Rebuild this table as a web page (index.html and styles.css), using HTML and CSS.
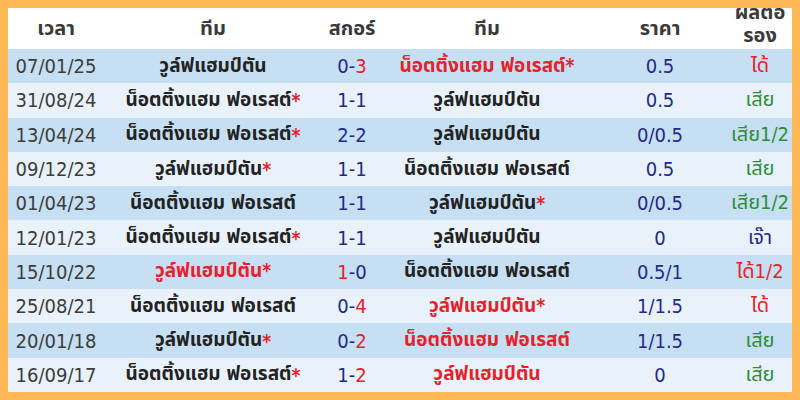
FILE: index.html
```html
<!DOCTYPE html>
<html lang="th">
<head>
<meta charset="utf-8">
<link rel="stylesheet" href="styles.css">
</head>
<body>
<div class="frame">
  <div class="table">
    <div class="row head">
      <div class="c">เวลา</div>
      <div class="c">ทีม</div>
      <div class="c">สกอร์</div>
      <div class="c">ทีม</div>
      <div class="c">ราคา</div>
      <div class="c wrap">ผลต่อ<br>รอง</div>
    </div>
    <div class="row odd">
      <div class="c date">07/01/25</div>
      <div class="c team">วูล์ฟแฮมป์ตัน</div>
      <div class="c score"><span class="b">0-</span><span class="r">3</span></div>
      <div class="c team red">น็อตติ้งแฮม ฟอเรสต์*</div>
      <div class="c price">0.5</div>
      <div class="c res win">ได้</div>
    </div>
    <div class="row even">
      <div class="c date">31/08/24</div>
      <div class="c team">น็อตติ้งแฮม ฟอเรสต์<span class="star">*</span></div>
      <div class="c score"><span class="b">1-1</span></div>
      <div class="c team">วูล์ฟแฮมป์ตัน</div>
      <div class="c price">0.5</div>
      <div class="c res lose">เสีย</div>
    </div>
    <div class="row odd">
      <div class="c date">13/04/24</div>
      <div class="c team">น็อตติ้งแฮม ฟอเรสต์<span class="star">*</span></div>
      <div class="c score"><span class="b">2-2</span></div>
      <div class="c team">วูล์ฟแฮมป์ตัน</div>
      <div class="c price">0/0.5</div>
      <div class="c res lose">เสีย1/2</div>
    </div>
    <div class="row even">
      <div class="c date">09/12/23</div>
      <div class="c team">วูล์ฟแฮมป์ตัน<span class="star">*</span></div>
      <div class="c score"><span class="b">1-1</span></div>
      <div class="c team">น็อตติ้งแฮม ฟอเรสต์</div>
      <div class="c price">0.5</div>
      <div class="c res lose">เสีย</div>
    </div>
    <div class="row odd">
      <div class="c date">01/04/23</div>
      <div class="c team">น็อตติ้งแฮม ฟอเรสต์</div>
      <div class="c score"><span class="b">1-1</span></div>
      <div class="c team">วูล์ฟแฮมป์ตัน<span class="star">*</span></div>
      <div class="c price">0/0.5</div>
      <div class="c res lose">เสีย1/2</div>
    </div>
    <div class="row even">
      <div class="c date">12/01/23</div>
      <div class="c team">น็อตติ้งแฮม ฟอเรสต์<span class="star">*</span></div>
      <div class="c score"><span class="b">1-1</span></div>
      <div class="c team">วูล์ฟแฮมป์ตัน</div>
      <div class="c price">0</div>
      <div class="c res push">เจ๊า</div>
    </div>
    <div class="row odd">
      <div class="c date">15/10/22</div>
      <div class="c team red">วูล์ฟแฮมป์ตัน*</div>
      <div class="c score"><span class="r">1</span><span class="b">-0</span></div>
      <div class="c team">น็อตติ้งแฮม ฟอเรสต์</div>
      <div class="c price">0.5/1</div>
      <div class="c res win">ได้1/2</div>
    </div>
    <div class="row even">
      <div class="c date">25/08/21</div>
      <div class="c team">น็อตติ้งแฮม ฟอเรสต์</div>
      <div class="c score"><span class="b">0-</span><span class="r">4</span></div>
      <div class="c team red">วูล์ฟแฮมป์ตัน*</div>
      <div class="c price">1/1.5</div>
      <div class="c res win">ได้</div>
    </div>
    <div class="row odd">
      <div class="c date">20/01/18</div>
      <div class="c team">วูล์ฟแฮมป์ตัน<span class="star">*</span></div>
      <div class="c score"><span class="b">0-</span><span class="r">2</span></div>
      <div class="c team red">น็อตติ้งแฮม ฟอเรสต์</div>
      <div class="c price">1/1.5</div>
      <div class="c res lose">เสีย</div>
    </div>
    <div class="row even">
      <div class="c date">16/09/17</div>
      <div class="c team">น็อตติ้งแฮม ฟอเรสต์<span class="star">*</span></div>
      <div class="c score"><span class="b">1-</span><span class="r">2</span></div>
      <div class="c team red">วูล์ฟแฮมป์ตัน</div>
      <div class="c price">0</div>
      <div class="c res lose">เสีย</div>
    </div>
  </div>
</div>
</body>
</html>
```
FILE: styles.css
```css
html, body {
  margin: 0;
  padding: 0;
}
body {
  width: 800px;
  height: 400px;
  overflow: hidden;
  font-family: "DejaVu Sans Condensed", "Noto Sans Thai", "Noto Sans", sans-serif;
  font-size: 20px;
  color: #333;
}
.frame {
  box-sizing: border-box;
  width: 800px;
  height: 400px;
  border: 8px solid #fdb955;
  background: #ffffff;
  overflow: hidden;
}
.table {
  display: flex;
  flex-direction: column;
}
.row {
  display: grid;
  grid-template-columns: 96px 218px 60px 210px 136px 64px;
  height: 34.3px;
}
.row.head {
  height: 41px;
  background: #ffffff;
  font-weight: bold;
  font-size: 20px;
  color: #3a3a3a;
}
.row.odd { background: #c7dff2; }
.row.even { background: #e9f2fb; }
.c {
  display: flex;
  align-items: center;
  justify-content: center;
  white-space: nowrap;
  overflow: hidden;
}
.c.wrap {
  align-items: flex-end;
  padding-bottom: 2px;
  line-height: 23px;
  text-align: center;
  white-space: normal;
}
.date { color: #3c3c3c; }
.team { font-weight: bold; color: #222; font-size: 19px; }
.team.red { color: #e3222b; }
.star { color: #e3222b; }
.score .b, .price { color: #1f2a86; }
.score .r { color: #e3222b; }
.res { overflow: visible; }
.res.win { color: #e3222b; }
.res.lose { color: #2e8c3a; }
.res.push { color: #1f2a86; }
```
